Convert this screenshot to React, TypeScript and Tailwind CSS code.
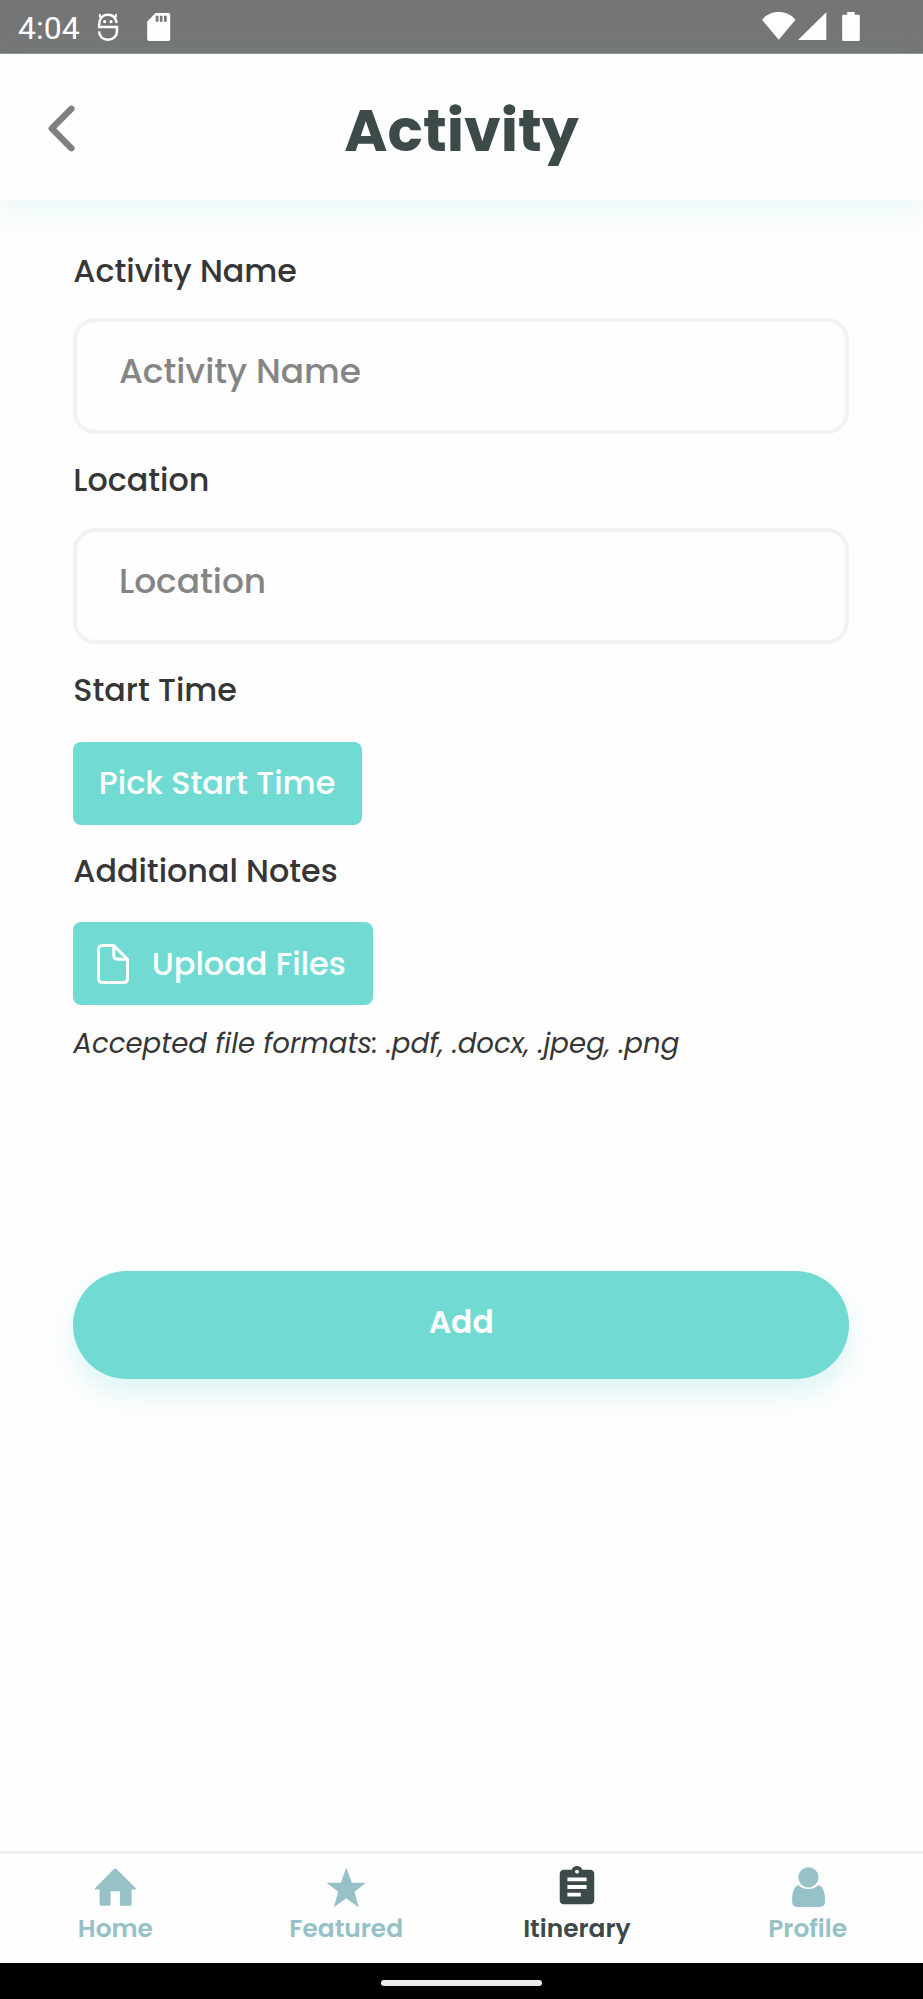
import type { ReactNode } from "react";
import { MdAssignment } from "react-icons/md";

function StatusBar() {
  return (
    <div className="flex h-[54px] shrink-0 items-start border-b border-[#919191] bg-[#757575] text-white">
      <span className="ml-[18px] w-[78px] font-['Roboto',sans-serif] text-[32px] leading-[56px]">4:04</span>
      <svg className="mt-[11px] h-8 w-6" viewBox="290 33 72 96" fill="none" stroke="currentColor" strokeWidth="7.500">
        <path d="M352 69C349 53 339 44.500 326 44.500C310 44.500 299.500 56 299.500 74V81H353V92C353 109 341 119 326 119C311 119 300 110 299 94" />
        <path d="M301.500 42V50L308 54M349.500 42V50L343 54" strokeWidth="5.500" />
        <circle cx="316" cy="65" r="4.800" fill="currentColor" stroke="none" />
        <circle cx="335" cy="65" r="4.800" fill="currentColor" stroke="none" />
      </svg>
      <svg className="mt-[13px] ml-[26.500px] h-7 w-6" viewBox="0 0 24 28" fill="currentColor">
        <path
          fillRule="evenodd"
          d="M8.500 0H21.500Q23.200 0 23.200 2V26Q23.200 28 21.200 28H2.200Q0.200 28 0.200 26V8.500ZM8.700 2.700V8.700H11.400V2.700ZM12.800 2.700V8.700H15.500V2.700ZM17 2.700V8.700H19.700V2.700Z"
        />
      </svg>
      <svg className="mt-3 ml-auto h-7 w-[34px]" viewBox="0 0 34 28" fill="currentColor">
        <path d="M0 7.700C4.500 2.500 10 0 16.700 0S29 2.500 33.500 7.700L16.700 27.800Z" />
      </svg>
      <svg className="mt-3 ml-0.5 h-7 w-[29px]" viewBox="0 0 29 28" fill="currentColor">
        <path d="M0 28L28.300 0.200V28Z" />
      </svg>
      <svg className="mt-3 mr-[63px] ml-[15px] h-[29px] w-[18px]" viewBox="0 0 18 29" fill="currentColor">
        <path d="M5.200 0H12.700V2.700H16.500Q17.800 2.700 17.800 4V27.700Q17.800 29 16.500 29H1.500Q0.200 29 0.200 27.700V4Q0.200 2.700 1.500 2.700H5.200Z" />
      </svg>
    </div>
  );
}

function Header() {
  return (
    <header className="grid h-[146px] shrink-0 grid-cols-[100px_1fr_100px] items-center bg-[#fefefe] shadow-[0_8px_30px_5px_rgba(112,218,211,0.125)]">
      <button className="ml-[48px] w-[28px]" aria-label="Back">
        <svg className="mt-[3px] block h-[47px] w-[27px]" viewBox="0 0 27 47" fill="none" stroke="#808080" strokeWidth="6.400" strokeLinecap="round" strokeLinejoin="round">
          <path d="M23.400 3.800L3.800 23.500L23.400 43.200" />
        </svg>
      </button>
      <h1 className="pt-[7px] text-center text-[58.600px] leading-[88px] font-bold text-[#3c4a49]">Activity</h1>
    </header>
  );
}

function Label({ children }: { children: ReactNode }) {
  return <div className="text-[31.750px] leading-[48px] font-medium text-[#363636]">{children}</div>;
}

function Field({ children }: { children: ReactNode }) {
  return (
    <div className="h-[116px] rounded-[22px] border-4 border-[#f2f2f2] pt-[23.200px] pl-[41.600px] text-[34.400px] leading-[52px] font-medium text-[#858585]">
      {children}
    </div>
  );
}

function FileIcon() {
  return (
    <svg className="h-10 w-8" viewBox="0 0 32 40" fill="none" stroke="currentColor" strokeWidth="3" strokeLinejoin="round">
      <path d="M16.800 1.500H5.500Q1.500 1.500 1.500 5.500V34.500Q1.500 38.500 5.500 38.500H26.500Q30.500 38.500 30.500 34.500V15.200Z" />
      <path d="M16.800 1.500V11.200Q16.800 15.200 20.800 15.200H30.500" />
    </svg>
  );
}

function HomeIcon() {
  return (
    <svg className="size-[46px]" viewBox="0 0 46 46" fill="currentColor">
      <path d="M21.900 5.100Q23.200 4 24.500 5.100L43.800 24.300Q44.600 25.600 43.200 25.600H39.600V40.500Q39.600 41.700 38.400 41.700H29.100Q27.900 41.700 27.900 40.500V27.200H18.600V40.500Q18.600 41.700 17.400 41.700H8.800Q7.600 41.700 7.600 40.500V25.600H3.600Q2.200 25.600 3 24.300Z" />
    </svg>
  );
}

function StarIcon() {
  return (
    <svg className="size-[46px]" viewBox="0 0 46 46" fill="currentColor">
      <path d="M23.200 3.700L28.900 18.700H42.900L31.600 27.700L35.600 43.300L23.200 34.200L10.900 43.300L15.200 27.700L3.600 18.700H17.900Z" />
    </svg>
  );
}

function ProfileIcon() {
  return (
    <svg className="size-[46px]" viewBox="0 0 46 46" fill="currentColor">
      <circle cx="23.400" cy="13.400" r="10.100" />
      <path d="M13.600 21C17.400 26.300 29.400 26.300 33.200 21C37.900 22.200 40.200 28.500 40.100 37Q40 42.900 34.900 42.900H12.200Q7.200 42.900 7.100 37C7 28.500 9.100 22.200 13.600 21Z" />
    </svg>
  );
}

function NavItem({ label, icon, active = false }: { label: string; icon: ReactNode; active?: boolean }) {
  return (
    <div className={active ? "flex flex-col items-center text-[#3c4a49]" : "flex flex-col items-center text-[#95c1c7]"}>
      {icon}
      <span className="text-[24.900px] leading-[37px] font-semibold">{label}</span>
    </div>
  );
}

export default function App() {
  return (
    <div className="flex h-[1999px] w-[923px] flex-col overflow-hidden bg-[#fefefe] font-['Poppins','Inter',sans-serif]">
      <StatusBar />
      <Header />
      <main className="flex flex-1 flex-col items-start pt-[46.500px] pr-[74px] pl-[73.300px]">
        <Label>Activity Name</Label>
        <div className="mt-[23.700px] w-full">
          <Field>Activity Name</Field>
        </div>
        <div className="mt-[21.800px]">
          <Label>Location</Label>
        </div>
        <div className="mt-6 w-full">
          <Field>Location</Field>
        </div>
        <div className="mt-[21.700px]">
          <Label>Start Time</Label>
        </div>
        <button className="mt-[28.400px] h-[83px] w-[289px] rounded-lg bg-[#71dbd3] pl-[25.500px] text-left text-[31.850px] leading-[83px] font-medium whitespace-nowrap text-white">
          Pick Start Time
        </button>
        <div className="mt-[21.600px]">
          <Label>Additional Notes</Label>
        </div>
        <button className="mt-[27.700px] flex h-[83px] w-[300px] items-center rounded-lg bg-[#71dbd3] pl-[23.400px] text-[31.950px] leading-[83px] font-medium whitespace-nowrap text-white">
          <FileIcon />
          <span className="ml-[23px]">Upload Files</span>
        </button>
        <p className="mt-[18.800px] text-[27.620px] leading-10 whitespace-nowrap text-[#363636] italic">
          Accepted file formats: .pdf, .docx, .jpeg, .png
        </p>
        <button className="mt-[206.800px] h-[108px] w-full rounded-full bg-[#70dad3] pb-1 text-center text-[31.400px] leading-[103px] font-semibold text-white shadow-[0_14px_28px_rgba(112,218,211,0.23)]">
          Add
        </button>
      </main>
      <nav className="grid h-[112px] shrink-0 grid-cols-4 border-t-[3px] border-[#f0f0f0] bg-[#fefefe] pt-[10px]">
        <NavItem label="Home" icon={<HomeIcon />} />
        <NavItem label="Featured" icon={<StarIcon />} />
        <NavItem label="Itinerary" icon={<MdAssignment className="size-[46px]" />} active />
        <NavItem label="Profile" icon={<ProfileIcon />} />
      </nav>
      <div className="flex h-9 shrink-0 justify-center bg-black pt-[17px]">
        <div className="h-[5.500px] w-[161px] rounded-full bg-[#ececec]" />
      </div>
    </div>
  );
}
